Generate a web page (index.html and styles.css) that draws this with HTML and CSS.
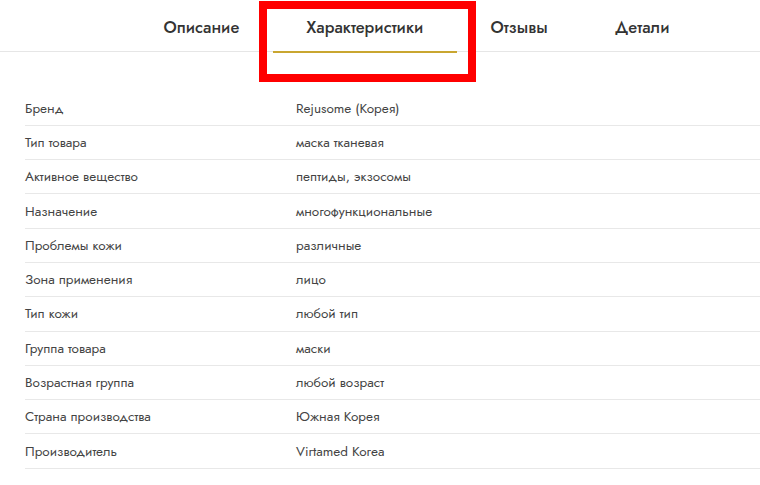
FILE: index.html
```html
<!DOCTYPE html>
<html lang="ru">
<head>
<meta charset="utf-8">
<link rel="stylesheet" href="styles.css">
</head>
<body>
<div class="page">
  <nav class="tabs">
    <div class="tab">Описание</div>
    <div class="tab active">Характеристики</div>
    <div class="tab">Отзывы</div>
    <div class="tab">Детали</div>
  </nav>
  <div class="highlight"></div>
  <div class="specs">
    <div class="row"><div class="label">Бренд</div><div class="value">Rejusome (Корея)</div></div>
    <div class="row"><div class="label">Тип товара</div><div class="value">маска тканевая</div></div>
    <div class="row"><div class="label">Активное вещество</div><div class="value">пептиды, экзосомы</div></div>
    <div class="row"><div class="label">Назначение</div><div class="value">многофункциональные</div></div>
    <div class="row"><div class="label">Проблемы кожи</div><div class="value">различные</div></div>
    <div class="row"><div class="label">Зона применения</div><div class="value">лицо</div></div>
    <div class="row"><div class="label">Тип кожи</div><div class="value">любой тип</div></div>
    <div class="row"><div class="label">Группа товара</div><div class="value">маски</div></div>
    <div class="row"><div class="label">Возрастная группа</div><div class="value">любой возраст</div></div>
    <div class="row"><div class="label">Страна производства</div><div class="value">Южная Корея</div></div>
    <div class="row"><div class="label">Производитель</div><div class="value">Virtamed Korea</div></div>
  </div>
</div>
</body>
</html>
```
FILE: styles.css
```css
* { box-sizing: border-box; }
html, body { margin: 0; padding: 0; background: #fff; }
body { font-family: "Jost", Lato, "Noto Sans", sans-serif; color: #333; }
.page { position: relative; width: 760px; height: 485px; overflow: hidden; }
.tabs {
  display: flex;
  padding-left: 130px;
  height: 52px;
  border-bottom: 1px solid #e6e6e6;
}
.tab {
  padding: 0 33.5px;
  font-size: 16.5px;
  font-weight: 500;
  color: #333;
  line-height: 54px;
  height: 53px;
  white-space: nowrap;
}
.tab.active { border-bottom: 2px solid #c9a630; }
.highlight {
  position: absolute;
  left: 259px; top: 1px;
  width: 217px; height: 81px;
  border: 8px solid #ff0000;
}
.specs { margin: 39.5px 0 0 25px; width: 800px; }
.row {
  display: flex;
  height: 34.3px;
  align-items: center;
  border-bottom: 1px solid #e8e8e8;
  font-size: 13.5px;
  color: #444;
}
.label { width: 271px; }
.value { flex: 1; }
```
